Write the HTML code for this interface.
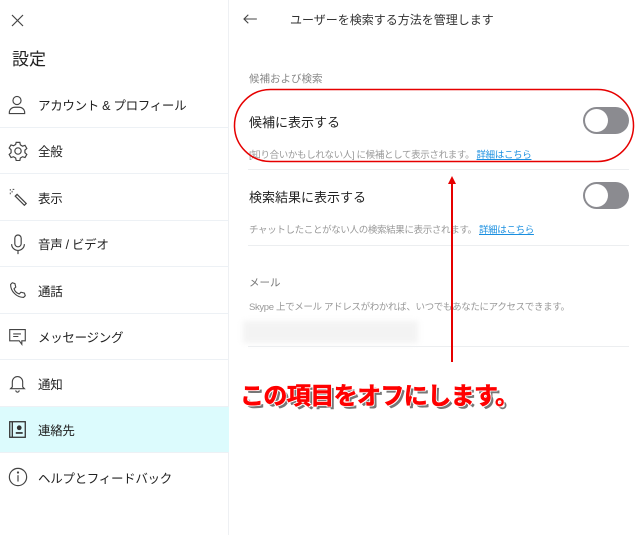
<!DOCTYPE html>
<html><head><meta charset="utf-8"><style>
*{margin:0;padding:0;box-sizing:border-box}
body{width:640px;height:535px;background:#fff;font-family:"Liberation Sans","Noto Sans CJK JP",sans-serif;position:relative;overflow:hidden;color:#333}
.side{position:absolute;left:0;top:0;width:229px;height:535px;border-right:1px solid #eef0f3}
.row{position:absolute;left:0;width:229px;height:46px;border-bottom:1px solid #edf1f5;font-size:12.5px;color:#222;display:flex;align-items:center}
.row svg{position:absolute;left:8px;top:13px}
.row span{position:absolute;left:38px;letter-spacing:-0.3px}
.abs{position:absolute;white-space:nowrap}
.tog{position:absolute;width:46px;height:27px;border-radius:14px;background:#8b8b90}
.tog::after{content:"";position:absolute;left:2px;top:2px;width:23px;height:23px;border-radius:50%;background:#fff}
.sep{position:absolute;left:248px;width:381px;height:1px;background:#eceef0}
.d{font-size:9.5px;color:#999;letter-spacing:-0.35px}
a{color:#1a8fe0;text-decoration:underline}
</style></head><body>
<div class="side">
<svg class="abs" style="left:11px;top:14px" width="13" height="13" viewBox="0 0 13 13"><path d="M1 1L12 12M12 1L1 12" stroke="#444" stroke-width="1.2"/></svg>
<div class="abs" style="left:12px;top:45px;font-size:17px;color:#222">設定</div>
<div class="row" style="top:82px"><svg width="18" height="20" viewBox="0 0 20 22" fill="none" stroke="#444" stroke-width="1.3"><circle cx="10" cy="6" r="4.5"/><path d="M1.5 20.5v-2a6 6 0 0 1 6-5h5a6 6 0 0 1 6 5v2z"/></svg><span>アカウント &amp; プロフィール</span></div>
<div class="row" style="top:128px"><svg width="20" height="20" viewBox="0 0 22 22" fill="none" stroke="#444" stroke-width="1.3"><circle cx="11" cy="11" r="3.5"/><path d="M9 1.5h4l.6 2.8 2.4 1.4 2.7-.9 2 3.4-2.1 1.9v2.8l2.1 1.9-2 3.4-2.7-.9-2.4 1.4-.6 2.8H9l-.6-2.8-2.4-1.4-2.7.9-2-3.4 2.1-1.9V9.6L1.3 7.7l2-3.4 2.7.9 2.4-1.4z"/></svg><span>全般</span></div>
<div class="row" style="top:175px"><svg width="20" height="20" viewBox="0 0 22 22" fill="none" stroke="#444" stroke-width="1.4"><path d="M8 9l10 10 2-2L10 7z"/><path d="M2 2h1M6 1v1M2 6h1M4 4h1" stroke-width="1.8"/></svg><span>表示</span></div>
<div class="row" style="top:221px"><svg width="20" height="22" viewBox="0 0 22 24" fill="none" stroke="#444" stroke-width="1.3"><rect x="7.5" y="1" width="7" height="13" rx="3.5"/><path d="M4 11a7 7 0 0 0 14 0M11 18v4"/></svg><span>音声 / ビデオ</span></div>
<div class="row" style="top:268px"><svg width="19" height="19" viewBox="0 0 22 22" fill="none" stroke="#444" stroke-width="1.3"><path d="M5 2l3 1 1 4-2 2c1 3 3 5 6 6l2-2 4 1 1 3-2 2C10 19 3 12 3 4z"/></svg><span>通話</span></div>
<div class="row" style="top:314px"><svg width="19" height="19" viewBox="0 0 22 22" fill="none" stroke="#444" stroke-width="1.3"><path d="M2 3h18v13h-4v4l-3-4H2z"/><path d="M6 8h9M6 11h6"/></svg><span>メッセージング</span></div>
<div class="row" style="top:361px"><svg width="19" height="19" viewBox="0 0 22 22" fill="none" stroke="#444" stroke-width="1.3"><path d="M5 15V9a6 6 0 0 1 12 0v6l2 2H3z"/><path d="M9 19a2 2 0 0 0 4 0"/></svg><span>通知</span></div>
<div class="row" style="top:407px;background:#dcfbfd"><svg width="19" height="19" viewBox="0 0 22 22" fill="none" stroke="#333" stroke-width="1.5"><rect x="2" y="2" width="18" height="18"/><path d="M5 2v18"/><circle cx="13" cy="9" r="2" fill="#333"/><path d="M9 15h8" stroke-width="2"/></svg><span>連絡先</span></div>
<div class="row" style="top:454px;border:none"><svg width="20" height="20" viewBox="0 0 22 22" fill="none" stroke="#444" stroke-width="1.3"><circle cx="11" cy="11" r="9.5"/><path d="M11 9v7"/><circle cx="11" cy="6" r=".6" fill="#444"/></svg><span>ヘルプとフィードバック</span></div>
</div>

<svg class="abs" style="left:242px;top:13px" width="16" height="12" viewBox="0 0 18 14" fill="none" stroke="#444" stroke-width="1.3"><path d="M17 7H2M7 2L2 7l5 5"/></svg>
<div class="abs" style="left:290px;top:11px;font-size:12px;color:#333">ユーザーを検索する方法を管理します</div>

<div class="abs" style="left:249px;top:71px;font-size:10.5px;color:#888">候補および検索</div>
<div class="abs" style="left:249px;top:112px;font-size:13px;color:#222">候補に表示する</div>
<div class="tog" style="left:583px;top:107px"></div>
<div class="abs d" style="left:249px;top:147px">[知り合いかもしれない人] に候補として表示されます。 <a>詳細はこちら</a></div>
<div class="sep" style="top:169px"></div>
<div class="abs" style="left:249px;top:187px;font-size:13px;color:#222">検索結果に表示する</div>
<div class="tog" style="left:583px;top:182px"></div>
<div class="abs d" style="left:249px;top:222px">チャットしたことがない人の検索結果に表示されます。 <a>詳細はこちら</a></div>
<div class="sep" style="top:245px"></div>
<div class="abs" style="left:249px;top:275px;font-size:10.5px;color:#777">メール</div>
<div class="abs d" style="left:249px;top:299px">Skype 上でメール アドレスがわかれば、いつでもあなたにアクセスできます。</div>
<div class="abs" style="left:243px;top:321px;width:175px;height:22px;background:#f3f3f3;filter:blur(3px)"></div>
<div class="sep" style="top:346px"></div>

<svg class="abs" style="left:0;top:0" width="640" height="535">
<rect x="234.5" y="89.5" width="399" height="72" rx="36" fill="none" stroke="#e60000" stroke-width="1.5"/>
<path d="M452 362V182" stroke="#e60000" stroke-width="2"/>
<path d="M448 184l4-8 4 8z" fill="#e60000"/>
</svg>
<div class="abs" style="left:240px;top:376px;font-size:24px;font-weight:bold;color:#777;letter-spacing:-0.6px;transform:translate(3px,3px)">この項目をオフにします。</div>
<div class="abs" style="left:240px;top:376px;font-size:24px;font-weight:bold;color:#f00;letter-spacing:-0.6px;-webkit-text-stroke:0.6px #f00;text-shadow:1px 1px 0 #fff,-1px -1px 0 #fff,1px -1px 0 #fff,-1px 1px 0 #fff">この項目をオフにします。</div>
</body></html>
